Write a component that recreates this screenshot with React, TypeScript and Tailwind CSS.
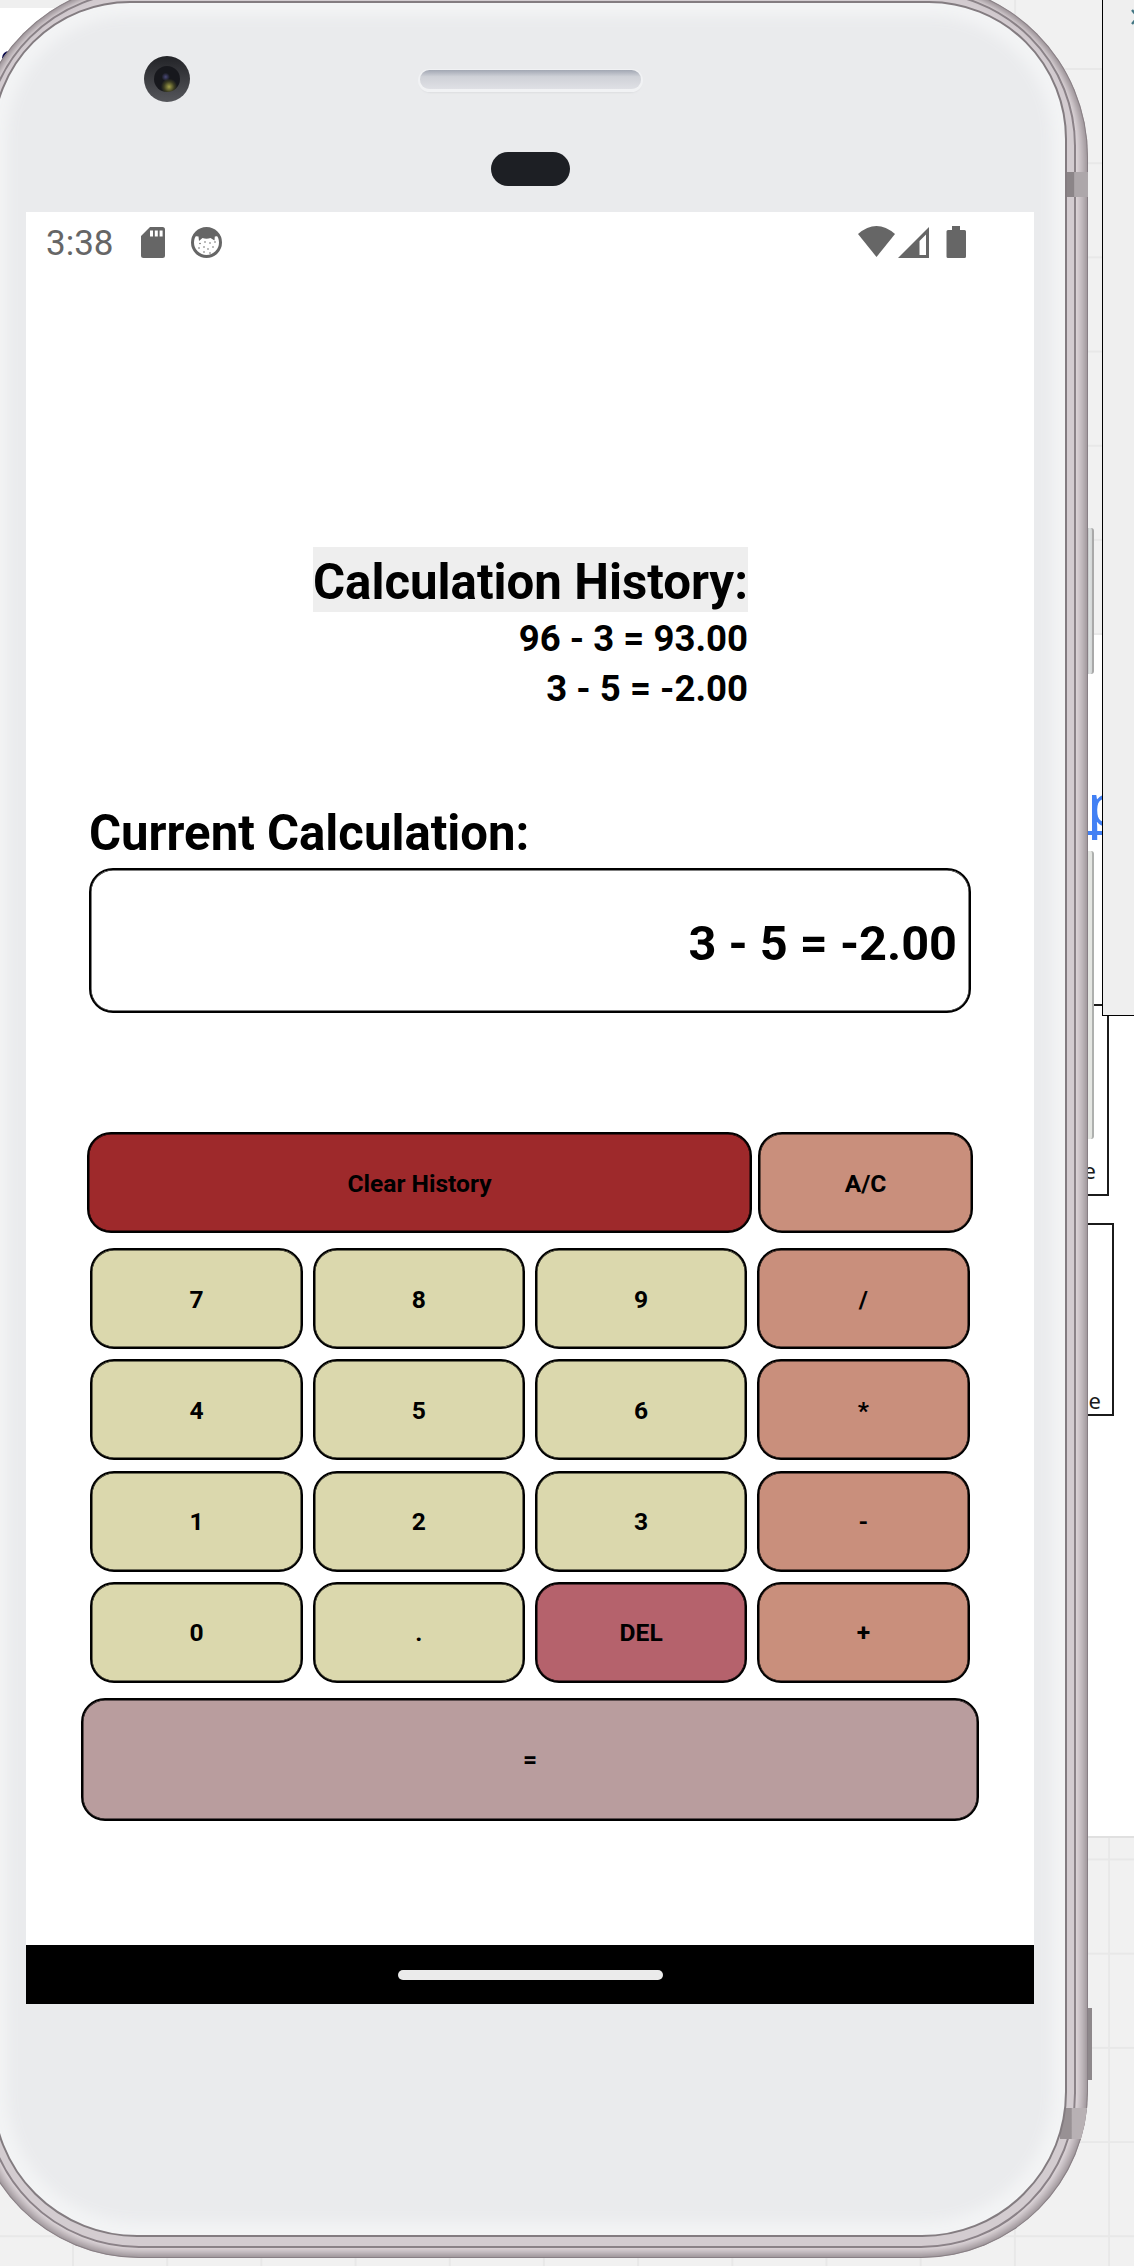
import React from "react";

type Tone = "num" | "op" | "del" | "clear" | "eq";

const tones: Record<Tone, string> = {
  num: "bg-[#dbd8ad]",
  op: "bg-[#c98f7c]",
  del: "bg-[#b5626c]",
  clear: "bg-[#9e292b]",
  eq: "bg-[#b99d9e]",
};

const keys: { label: string; tone: Tone }[] = [
  { label: "7", tone: "num" },
  { label: "8", tone: "num" },
  { label: "9", tone: "num" },
  { label: "/", tone: "op" },
  { label: "4", tone: "num" },
  { label: "5", tone: "num" },
  { label: "6", tone: "num" },
  { label: "*", tone: "op" },
  { label: "1", tone: "num" },
  { label: "2", tone: "num" },
  { label: "3", tone: "num" },
  { label: "-", tone: "op" },
  { label: "0", tone: "num" },
  { label: ".", tone: "num" },
  { label: "DEL", tone: "del" },
  { label: "+", tone: "op" },
];

function Key({ label, tone, className = "" }: { label: string; tone: Tone; className?: string }) {
  return (
    <button
      className={`flex items-center justify-center rounded-[24px] border-2 border-black pt-[3px] text-[24.6px] font-bold text-black shadow-[inset_0_0_0_0.5px_#000] ${tones[tone]} ${className}`}
    >
      {label}
    </button>
  );
}

const grid =
  "bg-[#f1f1f1] bg-[linear-gradient(to_right,#e8e8e8_2px,transparent_2px),linear-gradient(to_bottom,#e8e8e8_2px,transparent_2px)] bg-[size:94.2px_94.2px]";

/* Whiteboard window that lies behind the phone */
function Desktop() {
  return (
    <div className="absolute inset-0 flex flex-col overflow-hidden bg-white font-['Noto_Sans',sans-serif] text-[#1b1b1b]">
      <div className="flex h-[635px]">
        <div className="flex-1">
          <div className="h-2 bg-[#efefef]" />
          <div className="mt-[43px] ml-[2px] h-[14px] w-[14px] rounded-full bg-[#0a0a4a]" />
        </div>
        <div className={`w-[234px] bg-[position:19.9px_68px] ${grid}`} />
      </div>
      <div className="flex h-[1201px] flex-col pl-[1000px]">
        <a className="mt-[128px] pl-[87px] text-[59px] leading-[80px] text-[#4280f4] underline decoration-[4px] underline-offset-[5px] [text-decoration-skip-ink:none]">
          p
        </a>
        <div className="mt-[161px] flex h-[192px] w-[109px] items-end justify-end border-2 border-[#1b1b1b] pr-[11px] pb-[9px] text-[22px] leading-[30px]">
          e
        </div>
        <div className="mt-[27px] flex h-[193px] w-[114px] items-end justify-end border-2 border-[#1b1b1b] pr-[11px] text-[22px] leading-[28px]">
          e
        </div>
      </div>
      <div className={`flex-1 border-t-2 border-[#e0e0e0] bg-[position:72px_20.5px] ${grid}`} />
      <div className="absolute -top-px -right-2 flex h-[1017px] w-[40px] justify-end border border-black bg-[#efefef] pt-[9px]">
        <svg className="-mr-[4px] h-[16px] w-[14px]" viewBox="0 0 14 16" fill="none" stroke="#447784" strokeWidth="2.4">
          <path d="M1 1l6 7-6 7M7 1l6 7-6 7" />
        </svg>
      </div>
    </div>
  );
}

/* Metal rim, glass front and side buttons */
function Bezel() {
  return (
    <div className="absolute inset-0 overflow-hidden">
      <div className="ml-[1084px] flex h-full flex-col pt-[528px]">
        <div className="h-[146px] w-[10px] rounded-r-[3px] border-r-2 border-[#a9a9a9] bg-[linear-gradient(to_right,#999_45%,#dfe3e3_60%,#d3d6d6)]" />
        <div className="mt-[177px] h-[288px] w-[10px] rounded-r-[3px] border-r-2 border-[#aeb0ae] bg-[#e4e6e2]" />
        <div className="mt-[869px] h-[72px] w-[8px] bg-[#8e888b]" />
      </div>
      <div className="absolute top-[-18px] right-[46px] bottom-[8px] left-[-28px] overflow-hidden rounded-t-[175px] rounded-b-[167px] bg-[#cbc3c7] p-[12px] pt-[9px] pb-[10px] shadow-[inset_0_0_0_1px_#8f878b]">
        <div className="h-full rounded-[155px] border-2 border-[#8b8388] bg-[#d3ccd0] shadow-[0_0_6px_1px_#e6dfe2]" />
        <div className="absolute inset-0 rounded-t-[175px] rounded-b-[167px] shadow-[inset_0_0_9px_2px_#857c81]" />
        <div className="absolute top-[190px] right-0 h-[25px] w-[23px] bg-[linear-gradient(to_right,#8b8588_38%,#ada7aa_42%)]" />
        <div className="absolute right-0 bottom-[119px] h-[31px] w-[28px] bg-[linear-gradient(to_right,#989194_40%,#b8b1b4_44%)]" />
      </div>
      <div className="absolute top-px right-[67px] bottom-[29px] left-[-8px] rounded-t-[138px] rounded-b-[145px] border-2 border-[#837c80] bg-[#eaebed] shadow-[inset_0_0_14px_13px_#f3f4f5]" />
    </div>
  );
}

/* Front camera, speaker grille and proximity sensor */
function Sensors() {
  return (
    <header className="relative flex h-[212px] items-start pt-[56px] pl-[144px]">
      <div className="flex h-[46px] w-[46px] items-center justify-center rounded-full bg-[linear-gradient(#222327,#55565b)]">
        <div className="h-[26px] w-[26px] rounded-full bg-[radial-gradient(circle_at_58%_80%,#a3a04a_0,#3c3d22_20%,transparent_32%),radial-gradient(circle_at_45%_42%,#4a4a78_0,#17181d_20%)]" />
      </div>
      <div className="ml-[230px] flex flex-col items-center gap-[63px] pt-[14px]">
        <div className="h-[19px] w-[221px] rounded-full bg-[linear-gradient(#a2a7b3,#cfd1d7_35%,#dfe0e5)] shadow-[0_1px_0_2px_#f1f2f4,0_4px_2px_#dcdde0]" />
        <div className="h-[34px] w-[79px] rounded-full bg-[#1d1f24]" />
      </div>
    </header>
  );
}

function StatusBar() {
  return (
    <div className="flex h-[60px] items-center justify-between pr-[68px] pl-[20px] text-[#666]">
      <div className="flex items-center">
        <span className="w-[95px] pt-[2px] text-[35px] leading-none">3:38</span>
        <svg className="h-[31px] w-[24px]" viewBox="0 0 24 31" fill="currentColor">
          <path
            fillRule="evenodd"
            d="M9 0H21.500A2.500 2.500 0 0 1 24 2.500V28.500A2.500 2.500 0 0 1 21.500 31H2.500A2.500 2.500 0 0 1 0 28.500V9zM9 3.500v6h3v-6zM13.800 3.500v6h3v-6zM18.600 3.500v6h3v-6z"
          />
        </svg>
        <svg className="ml-[26px] h-[31px] w-[31px]" viewBox="0 0 31 31">
          <circle cx="15.500" cy="15.500" r="14" fill="#fff" stroke="#666" strokeWidth="3" />
          <path d="M3.500 9C8 -1 23 -1 27.500 9L23.800 9.500L23.500 13.500L19.500 11C17 12 14 12 11.500 11L8 14L7.500 9.500z" fill="#666" />
          <g fill="#666">
            <circle cx="9" cy="16.500" r=".8" />
            <circle cx="14" cy="15" r=".8" />
            <circle cx="19" cy="16" r=".8" />
            <circle cx="24" cy="15" r=".8" />
            <circle cx="8" cy="21" r=".8" />
            <circle cx="13" cy="20" r=".8" />
            <circle cx="17" cy="22" r=".8" />
            <circle cx="22" cy="20" r=".8" />
            <circle cx="13" cy="25" r=".8" />
            <circle cx="19" cy="26" r=".8" />
          </g>
        </svg>
      </div>
      <svg className="h-[32px] w-[108px]" viewBox="0 0 108 32" fill="currentColor">
        <path d="M0 8Q18.500-8 37 8L18.500 31z" />
        <path fillRule="evenodd" d="M71 1V32H40zM68 8.500L61.500 15V29H68z" />
        <path d="M94 0h8v4h4.500a1.500 1.500 0 0 1 1.500 1.500V30.500a1.500 1.500 0 0 1-1.500 1.500H90a1.500 1.500 0 0 1-1.500-1.500V5.500A1.500 1.500 0 0 1 90 4h4z" />
      </svg>
    </div>
  );
}

export default function App() {
  return (
    <div className="relative h-[2266px] w-[1134px] overflow-hidden font-['Roboto',sans-serif]">
      <Desktop />
      <Bezel />
      <Sensors />
      <main className="relative ml-[26px] flex h-[1792px] w-[1008px] flex-col bg-white text-black">
        <StatusBar />

        <section className="mt-[275px] ml-[287px] flex w-[435px] flex-col items-end font-bold whitespace-nowrap">
          <h1 className="flex h-[65px] w-full items-center justify-end bg-[#eee] pt-[6px] text-[49.2px] leading-none">
            Calculation History:
          </h1>
          <p className="h-[50px] pt-[5px] text-[36.6px] leading-[43px]">96 - 3 = 93.00</p>
          <p className="h-[50px] pt-[5px] text-[36.6px] leading-[43px]">3 - 5 = -2.00</p>
        </section>

        <section className="mt-[91px] ml-[63px] w-[882px] font-bold">
          <h2 className="h-[65px] text-[49.1px] leading-[60px]">Current Calculation:</h2>
          <div className="flex h-[145px] items-center justify-end rounded-[24px] border-2 border-black pt-[6px] pr-[12px] text-[48.7px] shadow-[inset_0_0_0_0.5px_#000]">
            3 - 5 = -2.00
          </div>
        </section>

        <section className="mt-[119px] flex flex-col items-center">
          <div className="flex gap-[6px]">
            <Key label="Clear History" tone="clear" className="h-[101px] w-[665px]" />
            <Key label="A/C" tone="op" className="h-[101px] w-[215px]" />
          </div>
          <div className="mt-[15px] grid grid-cols-[repeat(4,212.5px)] grid-rows-[repeat(4,101.2px)] gap-x-[9.8px] gap-y-[10.1px]">
            {keys.map((k) => (
              <Key key={k.label} label={k.label} tone={k.tone} />
            ))}
          </div>
          <Key label="=" tone="eq" className="mt-[15px] h-[122.5px] w-[898px]" />
        </section>

        <nav className="mt-auto flex h-[59px] items-center justify-center bg-black">
          <div className="h-[10px] w-[265px] rounded-full bg-[#ebebeb]" />
        </nav>
      </main>
    </div>
  );
}
